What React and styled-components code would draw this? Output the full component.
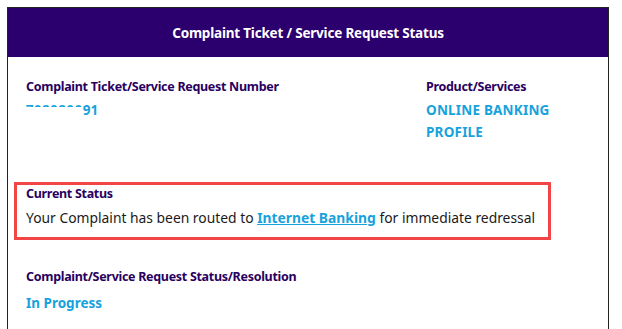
import React from "react";
import styled, { createGlobalStyle } from "styled-components";

const GlobalStyle = createGlobalStyle`
  body {
    margin: 0;
    background: #ffffff;
    font-family: "Noto Sans", "Open Sans", Arial, sans-serif;
  }
`;

const colors = {
  header: "#2b006e",
  label: "#2a005f",
  value: "#17a2dc",
  text: "#1a1a1a",
  border: "#222222",
  alert: "#f24545",
};

const Page = styled.div`
  padding: 7px 13px 0 7px;
`;

const Card = styled.div`
  border: 1px solid ${colors.border};
  border-bottom: none;
  background: #fff;
  padding-bottom: 40px;
`;

const Header = styled.div`
  height: 49px;
  background: ${colors.header};
  display: flex;
  align-items: center;
  justify-content: center;
  color: #fff;
  font-weight: 700;
  font-size: 13.5px;
  letter-spacing: -0.2px;
`;

const Body = styled.div`
  padding: 20px 0 0 18px;
`;

const TopRow = styled.div`
  display: grid;
  grid-template-columns: 400px 1fr;
`;

const Field = styled.div`
  display: flex;
  flex-direction: column;
  margin-top: ${({ $top }) => $top || 0}px;
`;

const Label = styled.div`
  color: ${colors.label};
  font-weight: 700;
  font-size: 12.5px;
  line-height: ${({ $lh }) => $lh || 20}px;
  letter-spacing: -0.3px;
`;

const Value = styled.div`
  color: ${colors.value};
  font-weight: 700;
  font-size: 13.5px;
  line-height: 22px;
  margin-top: ${({ $top }) => $top ?? 2}px;
  letter-spacing: ${({ $caps }) => ($caps ? "0.2px" : "0")};
`;

const Masked = styled.span`
  color: transparent;
  letter-spacing: 0.4px;
  background: linear-gradient(to bottom, transparent 24%, ${colors.value} 24%, ${colors.value} 34%, transparent 34%);
  -webkit-background-clip: text;
  background-clip: text;
`;

const StatusBox = styled.div`
  box-sizing: border-box;
  margin: 39px 0 0 -12px;
  width: 537px;
  border: 3px solid ${colors.alert};
  padding: 1px 9px 8px;
`;

const Message = styled.div`
  margin-top: 5px;
  color: ${colors.text};
  font-size: 13.85px;
  line-height: 22px;
  white-space: nowrap;
`;

const Link = styled.a`
  color: ${colors.value};
  font-weight: 700;
  text-decoration: underline;
  cursor: pointer;
`;

export default function App() {
  return (
    <Page>
      <GlobalStyle />
      <Card>
        <Header>Complaint Ticket / Service Request Status</Header>
        <Body>
          <TopRow>
            <Field>
              <Label>Complaint Ticket/Service Request Number</Label>
              <Value>
                <Masked>7020200</Masked>91
              </Value>
            </Field>
            <Field>
              <Label>Product/Services</Label>
              <Value $caps>
                ONLINE BANKING
                <br />
                PROFILE
              </Value>
            </Field>
          </TopRow>

          <StatusBox>
            <Label $lh={16}>Current Status</Label>
            <Message>
              Your Complaint has been routed to <Link>Internet Banking</Link> for immediate redressal
            </Message>
          </StatusBox>

          <Field $top={27}>
            <Label>Complaint/Service Request Status/Resolution</Label>
            <Value $top={5}>In Progress</Value>
          </Field>
        </Body>
      </Card>
    </Page>
  );
}
